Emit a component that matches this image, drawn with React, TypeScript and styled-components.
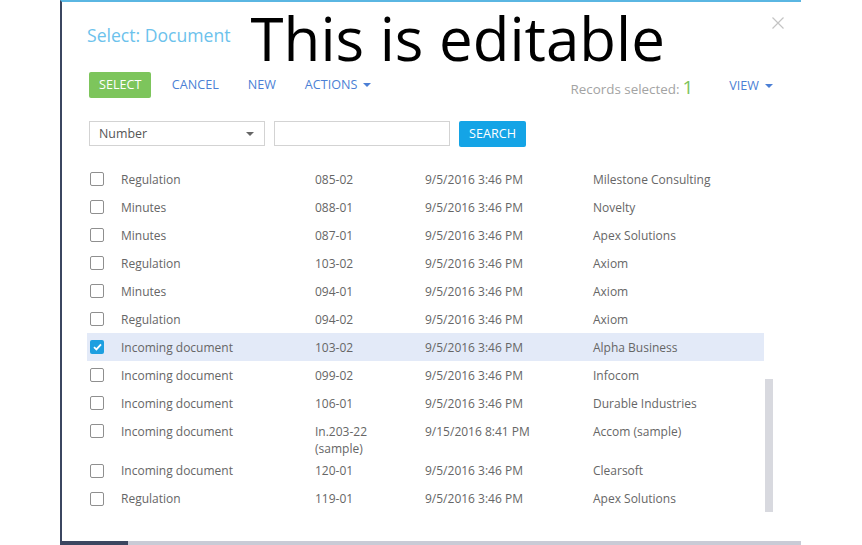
import React from "react";
import styled, { createGlobalStyle } from "styled-components";

const Global = createGlobalStyle`
  html, body { margin: 0; padding: 0; background: #fff; overflow: hidden; }
  body { font-family: "Open Sans", "Noto Sans", sans-serif; }
  #root { width: 862px; height: 545px; }
`;

const Page = styled.div`
  width: 862px;
  height: 545px;
  display: flex;
  flex-direction: column;
  padding-left: 60px;
  box-sizing: border-box;
`;

const Dialog = styled.div`
  position: relative;
  width: 741px;
  height: 541px;
  box-sizing: border-box;
  background: #fff;
  border-left: 2px solid #3b4660;
  border-top: 2px solid #5ab6e2;
  padding: 0 28px 0 25px;
  display: flex;
  flex-direction: column;
`;

const BottomBar = styled.div`
  width: 741px;
  height: 4px;
  display: flex;
`;

const BarSegment = styled.div<{ $w?: number; $c: string }>`
  background: ${(p) => p.$c};
  ${(p) => (p.$w ? `width: ${p.$w}px;` : "flex: 1;")}
`;

const HeaderRow = styled.div`
  height: 69px;
  display: flex;
  align-items: flex-start;
`;

const Title = styled.div`
  margin-top: 21px;
  font-size: 17.6px;
  line-height: 24px;
  color: #6cc2ec;
  white-space: nowrap;
`;

const BigText = styled.div`
  margin-top: 4px;
  margin-left: 20px;
  font-size: 60px;
  line-height: 64px;
  height: 64px;
  color: #000;
  white-space: nowrap;
`;

const Close = styled.div`
  position: absolute;
  top: 11px;
  right: 16px;
  width: 14px;
  height: 14px;
`;

const Toolbar = styled.div`
  height: 26px;
  margin-top: 1px;
  margin-left: 2px;
  display: flex;
  align-items: center;
`;

const PrimaryButton = styled.div<{ $bg: string }>`
  height: 26px;
  padding: 0 10px;
  border-radius: 2px;
  background: ${(p) => p.$bg};
  color: #fff;
  font-size: 12.6px;
  line-height: 26px;
  box-sizing: border-box;
  white-space: nowrap;
`;

const SelectButton = styled(PrimaryButton)`
  margin-right: 6px;
`;

const LinkButton = styled.div`
  padding: 0 14.5px;
  color: #4b7fd5;
  font-size: 12.6px;
  line-height: 26px;
  display: flex;
  align-items: center;
  white-space: nowrap;
`;

const Caret = styled.span<{ $c?: string }>`
  display: inline-block;
  margin-left: 6px;
  width: 0;
  height: 0;
  border-left: 4px solid transparent;
  border-right: 4px solid transparent;
  border-top: 4px solid ${(p) => p.$c || "#4b7fd5"};
`;

const Spacer = styled.div`
  flex: 1;
`;

const Records = styled.div`
  display: flex;
  align-items: baseline;
  margin-top: 4px;
  margin-right: 36px;
  color: #a3a3a3;
  font-size: 13.4px;
  white-space: nowrap;
`;

const Count = styled.span`
  margin-left: 3px;
  color: #7cc35a;
  font-size: 19px;
`;

const ViewLink = styled(LinkButton)`
  padding: 0;
  margin-top: 1px;
`;

const FilterRow = styled.div`
  margin-top: 23px;
  margin-left: 2px;
  display: flex;
  gap: 9px;
  align-items: flex-start;
`;

const SelectBox = styled.div`
  width: 176px;
  height: 25px;
  box-sizing: border-box;
  border: 1px solid #d3d3d3;
  padding: 0 10px 0 9px;
  display: flex;
  align-items: center;
  justify-content: space-between;
  font-size: 12.4px;
  color: #555;
`;

const TextBox = styled.div`
  width: 176px;
  height: 25px;
  box-sizing: border-box;
  border: 1px solid #d3d3d3;
`;

const SearchButton = styled(PrimaryButton)`
  width: 67px;
  padding: 0;
  text-align: center;
`;

const ListArea = styled.div`
  margin-top: 18px;
  display: flex;
  gap: 1px;
`;

const Rows = styled.div`
  width: 679px;
  display: flex;
  flex-direction: column;
`;

const Row = styled.div<{ $selected?: boolean }>`
  display: grid;
  grid-template-columns: 34px 194px 110px 168px 1fr;
  min-height: 28px;
  box-sizing: border-box;
  padding-top: 5.5px;
  background: ${(p) => (p.$selected ? "#e3eaf8" : "transparent")};
  font-size: 12px;
  line-height: 17px;
  color: #666;
`;

const Cell = styled.div`
  white-space: pre-line;
`;

const CheckCell = styled.div`
  padding-left: 3px;
  padding-top: 1.5px;
`;

const Check = styled.div<{ $on?: boolean }>`
  width: 14px;
  height: 14px;
  box-sizing: border-box;
  border-radius: 2px;
  border: ${(p) => (p.$on ? "none" : "1.5px solid #8f8f8f")};
  background: ${(p) => (p.$on ? "#1d9fe0" : "#fff")};
  display: flex;
  align-items: center;
  justify-content: center;
`;

const ScrollTrack = styled.div`
  width: 8px;
  display: flex;
  flex-direction: column;
`;

const Thumb = styled.div`
  margin-top: 214px;
  height: 133px;
  background: #d8d9df;
`;

type Item = { type: string; num: string; date: string; acc: string; sel?: boolean };

const items: Item[] = [
  { type: "Regulation", num: "085-02", date: "9/5/2016 3:46 PM", acc: "Milestone Consulting" },
  { type: "Minutes", num: "088-01", date: "9/5/2016 3:46 PM", acc: "Novelty" },
  { type: "Minutes", num: "087-01", date: "9/5/2016 3:46 PM", acc: "Apex Solutions" },
  { type: "Regulation", num: "103-02", date: "9/5/2016 3:46 PM", acc: "Axiom" },
  { type: "Minutes", num: "094-01", date: "9/5/2016 3:46 PM", acc: "Axiom" },
  { type: "Regulation", num: "094-02", date: "9/5/2016 3:46 PM", acc: "Axiom" },
  { type: "Incoming document", num: "103-02", date: "9/5/2016 3:46 PM", acc: "Alpha Business", sel: true },
  { type: "Incoming document", num: "099-02", date: "9/5/2016 3:46 PM", acc: "Infocom" },
  { type: "Incoming document", num: "106-01", date: "9/5/2016 3:46 PM", acc: "Durable Industries" },
  { type: "Incoming document", num: "In.203-22\n(sample)", date: "9/15/2016 8:41 PM", acc: "Accom (sample)" },
  { type: "Incoming document", num: "120-01", date: "9/5/2016 3:46 PM", acc: "Clearsoft" },
  { type: "Regulation", num: "119-01", date: "9/5/2016 3:46 PM", acc: "Apex Solutions" },
];

export default function App() {
  return (
    <>
      <Global />
      <Page>
        <Dialog>
          <HeaderRow>
            <Title>Select: Document</Title>
            <BigText>This is editable</BigText>
          </HeaderRow>
          <Close>
            <svg width="14" height="14" viewBox="0 0 14 14">
              <path d="M1.5 1.5 L12.5 12.5 M12.5 1.5 L1.5 12.5" stroke="#c4c4c4" strokeWidth="1.2" fill="none" />
            </svg>
          </Close>
          <Toolbar>
            <SelectButton $bg="#7dc55c">SELECT</SelectButton>
            <LinkButton>CANCEL</LinkButton>
            <LinkButton>NEW</LinkButton>
            <LinkButton>
              ACTIONS
              <Caret />
            </LinkButton>
            <Spacer />
            <Records>
              Records selected:
              <Count>1</Count>
            </Records>
            <ViewLink>
              VIEW
              <Caret />
            </ViewLink>
          </Toolbar>
          <FilterRow>
            <SelectBox>
              Number
              <Caret $c="#666" />
            </SelectBox>
            <TextBox />
            <SearchButton $bg="#14a4e6">SEARCH</SearchButton>
          </FilterRow>
          <ListArea>
            <Rows>
              {items.map((it, i) => (
                <Row key={i} $selected={it.sel}>
                  <CheckCell>
                    <Check $on={it.sel}>
                      {it.sel && (
                        <svg width="9" height="8" viewBox="0 0 9 8">
                          <path d="M1 4.2 L3.4 6.4 L8 1.4" stroke="#fff" strokeWidth="1.8" fill="none" />
                        </svg>
                      )}
                    </Check>
                  </CheckCell>
                  <Cell>{it.type}</Cell>
                  <Cell>{it.num}</Cell>
                  <Cell>{it.date}</Cell>
                  <Cell>{it.acc}</Cell>
                </Row>
              ))}
            </Rows>
            <ScrollTrack>
              <Thumb />
            </ScrollTrack>
          </ListArea>
        </Dialog>
        <BottomBar>
          <BarSegment $w={68} $c="#3b4660" />
          <BarSegment $c="#c9cbd6" />
        </BottomBar>
      </Page>
    </>
  );
}
